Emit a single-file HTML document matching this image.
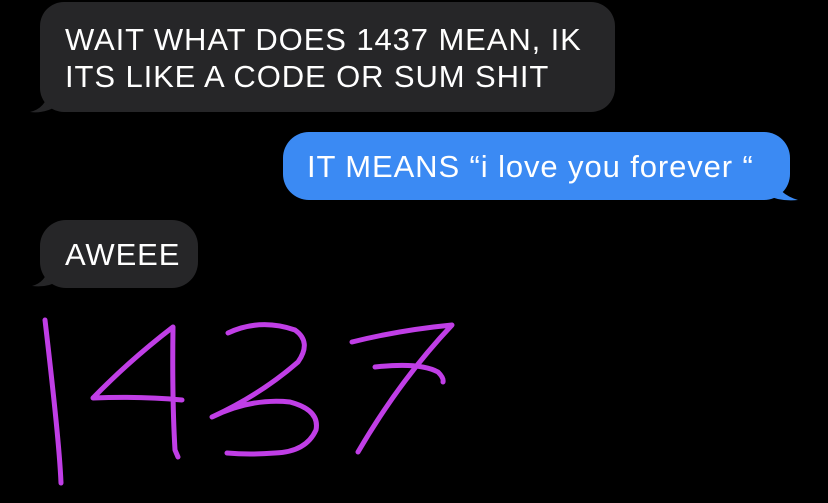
<!DOCTYPE html>
<html><head><style>
body{margin:0;width:828px;height:503px;background:#000;position:relative;overflow:hidden;font-family:"Liberation Sans",sans-serif;}
.b{position:absolute;color:#fff;font-size:31px;line-height:37px;letter-spacing:0.9px;box-sizing:border-box;white-space:nowrap;}
.g{background:#262628;}
</style></head><body>
<svg width="828" height="503" style="position:absolute;left:0;top:0">
<path d="M48 92 Q46 108 30 112 Q46 114 60 104 Z" fill="#262628"/>
<path d="M48 268 Q46 282 32 286 Q48 288 60 280 Z" fill="#262628"/>
<path d="M774 178 Q778 194 798 200 Q780 202 764 194 Z" fill="#3b8af3"/>
</svg>
<div class="b g" style="left:40px;top:2px;width:575px;height:110px;border-radius:24px;padding:19px 0 0 25px;">WAIT WHAT DOES 1437 MEAN, IK<br>ITS LIKE A CODE OR SUM SHIT</div>
<div class="b" style="left:283px;top:132px;width:507px;height:68px;border-radius:26px;background:#3b8af3;padding:16px 0 0 24px;">IT MEANS “i love you forever “</div>
<div class="b g" style="left:40px;top:220px;width:158px;height:68px;border-radius:26px;padding:16px 0 0 25px;">AWEEE</div>
<svg width="828" height="503" style="position:absolute;left:0;top:0" fill="none" stroke="#c03ee6" stroke-width="5" stroke-linecap="round" stroke-linejoin="round">
<path d="M45 320 Q52 380 56 420 Q60 460 61 483"/>
<path d="M173 327 Q130 360 93 398 Q140 396 182 400 M173 327 Q172 400 175 450 L178 457"/>
<path d="M228 333 Q260 318 295 330 Q312 342 298 362 Q260 395 212 417 Q250 398 290 402 Q320 410 316 430 Q306 452 275 453 Q250 455 227 453"/>
<path d="M352 342 Q400 330 452 325 Q400 380 358 452 M375 367 Q420 362 438 372 Q444 378 443 382"/>
</svg>
</body></html>
